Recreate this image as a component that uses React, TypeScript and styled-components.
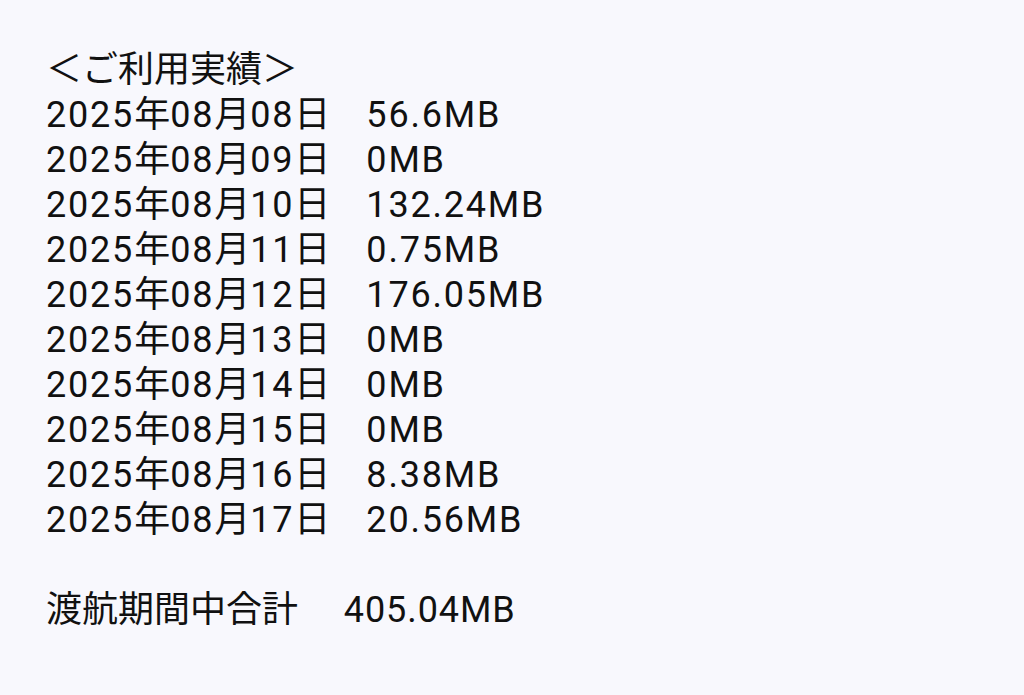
import React from 'react';
import styled, { createGlobalStyle } from 'styled-components';

const GlobalStyle = createGlobalStyle`
    html, body {
        margin: 0;
        padding: 0;
        background: #f8f8fd;
    }
`;

const Page = styled.div`
    min-height: 695px;
    box-sizing: border-box;
    padding: 48px 0 0 46px;
    background: #f8f8fd;
    color: #111;
    font-family: Roboto, 'Noto Sans CJK JP', sans-serif;
    font-size: 36px;
    line-height: 45px;
`;

const Line = styled.div<{ $gapBefore?: boolean }>`
    white-space: pre;
    margin-top: ${(p) => (p.$gapBefore ? '45px' : '0')};
`;

// latin runs are set a little wider than plain Roboto
const Latin = styled.span<{ $spacing: number }>`
    letter-spacing: ${(p) => p.$spacing}px;
`;

interface UsageRow {
    date: string;
    amount: string;
}

const rows: UsageRow[] = [
    { date: '2025年08月08日', amount: '56.6MB' },
    { date: '2025年08月09日', amount: '0MB' },
    { date: '2025年08月10日', amount: '132.24MB' },
    { date: '2025年08月11日', amount: '0.75MB' },
    { date: '2025年08月12日', amount: '176.05MB' },
    { date: '2025年08月13日', amount: '0MB' },
    { date: '2025年08月14日', amount: '0MB' },
    { date: '2025年08月15日', amount: '0MB' },
    { date: '2025年08月16日', amount: '8.38MB' },
    { date: '2025年08月17日', amount: '20.56MB' },
];

const Mixed = ({ text, spacing }: { text: string; spacing: number }) => (
    <>
        {text.split(/([0-9.A-Z ]+)/).map((part, i) =>
            /^[0-9.A-Z ]+$/.test(part) ? (
                <Latin key={i} $spacing={spacing}>
                    {part}
                </Latin>
            ) : (
                part
            ),
        )}
    </>
);

const App = () => {
    return (
        <Page>
            <GlobalStyle />
            <Line>＜ご利用実績＞</Line>
            {rows.map((row) => (
                <Line key={row.date}>
                    <Mixed text={`${row.date}　${row.amount}`} spacing={1.8} />
                </Line>
            ))}
            <Line $gapBefore>
                <Mixed text="渡航期間中合計　 405.04MB" spacing={0.9} />
            </Line>
        </Page>
    );
};

export default App;
